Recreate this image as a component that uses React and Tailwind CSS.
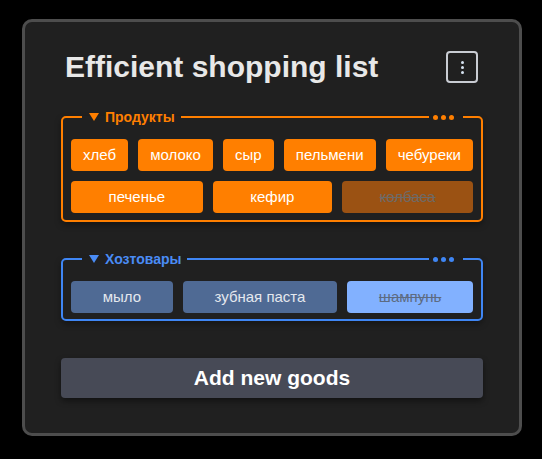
import React from "react";

const groups = [
  {
    name: "Продукты",
    tone: "orange",
    items: [
      { label: "хлеб" },
      { label: "молоко" },
      { label: "сыр" },
      { label: "пельмени" },
      { label: "чебуреки" },
      { label: "печенье" },
      { label: "кефир" },
      { label: "колбаса", done: true },
    ],
  },
  {
    name: "Хозтовары",
    tone: "blue",
    items: [{ label: "мыло" }, { label: "зубная паста" }, { label: "шампунь", done: true }],
  },
];

const tones = {
  orange: {
    border: "border-[#ff7f00]",
    text: "text-[#ff7f00]",
    line: "bg-[#ff7f00]",
    dot: "bg-[#ff7f00]",
    chip: "bg-[#ff7f00] text-white",
    done: "bg-[#9b5213] text-[#6e6a66] line-through",
  },
  blue: {
    border: "border-[#3f86f4]",
    text: "text-[#4a8cf5]",
    line: "bg-[#3f86f4]",
    dot: "bg-[#3f86f4]",
    chip: "bg-[#4f6a94] text-[#e4e8ee]",
    done: "bg-[#82b1ff] text-[#5d6b82] line-through",
  },
};

function Group({ group, className }) {
  const t = tones[group.tone];
  return (
    <fieldset
      className={`border-2 ${t.border} rounded-[5px] px-0 pt-3 shadow-[0_3px_6px_rgba(0,0,0,0.35)] ${className}`}
    >
      <legend className="ml-[19px] w-[calc(100%-37px)] flex items-center h-5">
        <span className={`flex items-center gap-[6px] pl-[7px] pr-[6px] text-[14px] font-bold leading-5 ${t.text}`}>
          {/* треугольник-сворачивалка */}
          <span className="w-0 h-0 border-x-[5px] border-x-transparent border-t-[8px] border-t-current" />
          {group.name}
        </span>
        <span className={`flex-1 h-[2px] ${t.line}`} />
        <span className="flex gap-[3px] pl-1 pr-[9px]">
          <span className={`w-[5px] h-[5px] rounded-full ${t.dot}`} />
          <span className={`w-[5px] h-[5px] rounded-full ${t.dot}`} />
          <span className={`w-[5px] h-[5px] rounded-full ${t.dot}`} />
        </span>
      </legend>
      <div className="flex flex-wrap gap-2.5 px-2">
        {group.items.map((item) => (
          <div
            key={item.label}
            className={`grow h-8 px-2.5 rounded-[4px] flex items-center justify-center text-[15px] ${
              item.done ? t.done : t.chip
            }`}
          >
            {item.label}
          </div>
        ))}
      </div>
    </fieldset>
  );
}

export default function App() {
  return (
    <div className="min-h-[459px] bg-black pt-[19px] pl-[22px] font-['Liberation_Sans',Arial,sans-serif]">
      <div className="w-[500px] bg-[#202020] border-[3px] border-[#4d4d4d] rounded-[10px] px-9 pt-[29px] pb-[35px]">
        <div className="flex items-center justify-between pl-1 pr-[5px] h-8">
          <h1 className="text-[30px] font-bold text-[#e8e8e8] leading-8">Efficient shopping list</h1>
          <button className="w-8 h-8 border-2 border-[#c9ccd3] rounded-[4px] flex flex-col items-center justify-center gap-[2px]">
            <span className="w-[3px] h-[3px] rounded-full bg-[#d6e2f0]" />
            <span className="w-[3px] h-[3px] rounded-full bg-[#d6e2f0]" />
            <span className="w-[3px] h-[3px] rounded-full bg-[#d6e2f0]" />
          </button>
        </div>
        <Group group={groups[0]} className="mt-6 pb-[7px]" />
        <Group group={groups[1]} className="mt-[27px] pb-[6px]" />
        <button className="mt-[37px] w-full h-10 bg-[#474a56] rounded-[4px] text-white text-[21px] font-bold shadow-[0_3px_6px_rgba(0,0,0,0.45)]">
          Add new goods
        </button>
      </div>
    </div>
  );
}
